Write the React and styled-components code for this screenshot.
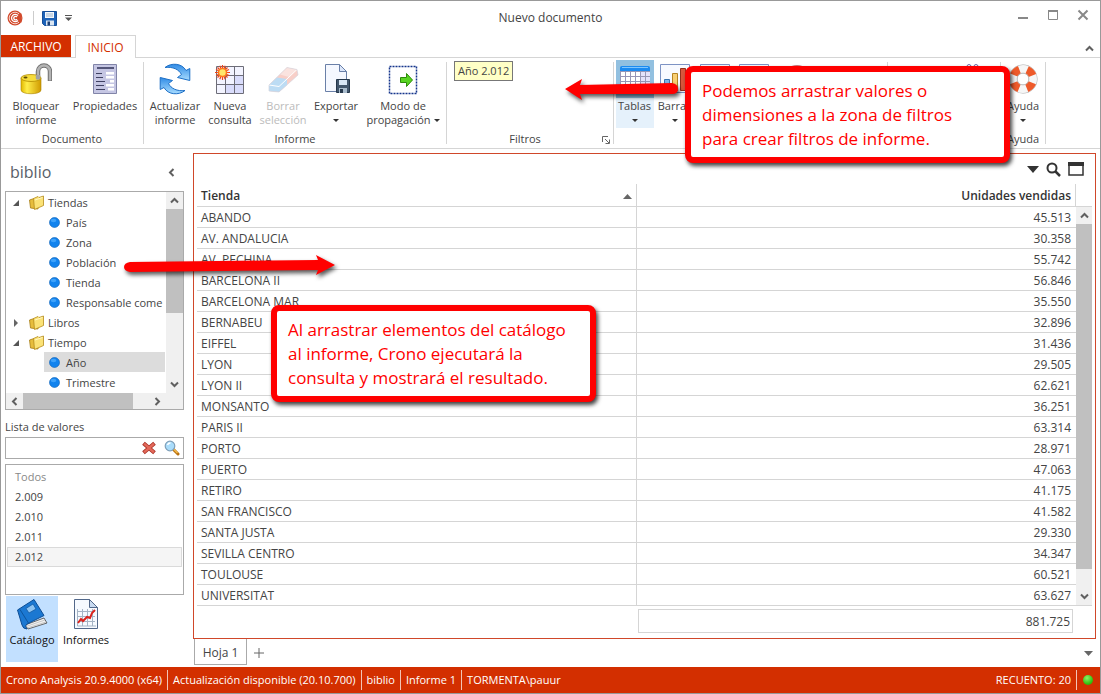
import React from "react";
import styled, { createGlobalStyle, css } from "styled-components";

const Global = createGlobalStyle`
  *, *::before, *::after { box-sizing: border-box; }
  body { margin: 0; background: #fff; }
  body, button, input, table { font-family: "Open Sans", "Noto Sans", sans-serif; font-size: 12px; line-height: 14px; color: #444; }
  button { border: 0; padding: 0; background: transparent; }
  ul { list-style: none; margin: 0; padding: 0; }
  svg { display: block; flex: none; }
`;

const accent = "#d32f00";
const line = "#d5d5d5";

const Window = styled.div`
  position: relative;
  display: flex;
  flex-direction: column;
  min-height: 100vh;
  border: 1px solid #999;
  overflow: hidden;
`;

const TitleBar = styled.header`
  display: grid;
  grid-template-columns: 1fr auto 1fr;
  align-items: center;
  height: 34px;
  padding: 0 6px;
`;
const QuickAccess = styled.div`
  display: flex;
  align-items: center;
  gap: 8px;
`;
const QuickDivider = styled.span`
  width: 1px;
  height: 14px;
  margin-left: 2px;
  background: #ccc;
`;
const Title = styled.h1`
  margin: 0;
  font-size: 12px;
  font-weight: 400;
`;
const WindowButtons = styled.div`
  display: flex;
  justify-content: flex-end;
  align-items: center;
  gap: 18px;
  padding: 0 5px 6px 0;
`;

const TabRow = styled.nav`
  display: flex;
  align-items: flex-end;
  gap: 4px;
  height: 23px;
  padding-right: 6px;
  box-shadow: inset 0 -1px ${line};
`;
const RibbonTab = styled.button`
  height: 23px;
  padding-top: 2px;
  color: ${accent};
  ${(p) =>
    p.$file
      ? css`
          width: 70px;
          height: 22px;
          align-self: flex-start;
          background: ${accent};
          color: #fff;
        `
      : css`
          width: 61px;
          background: #fff;
          border: 1px solid ${line};
          border-bottom: 0;
        `}
`;
const Collapse = styled.button`
  margin: 0 0 5px auto;
`;

const Ribbon = styled.section`
  display: flex;
  height: 91px;
  border-bottom: 1px solid ${line};
  font-size: 11px;
  button { font-size: 11px; }
`;
const Separator = styled.span`
  flex: none;
  width: 1px;
  margin: 4px 0;
  background: ${line};
`;
const Group = styled.div`
  display: flex;
  flex-direction: column;
  flex: none;
  width: ${(p) => p.$w}px;
`;
const GroupItems = styled.div`
  display: flex;
  justify-content: center;
  flex: 1;
  padding: 2px 0 4px;
`;
const GroupLabel = styled.div`
  display: flex;
  justify-content: center;
  align-items: center;
  position: relative;
  height: 14px;
  margin-bottom: 2px;
  padding-right: ${(p) => (p.$launcher ? 10 : 0)}px;
`;
const Launcher = styled.button`
  position: absolute;
  right: 3px;
  top: 4px;
`;
const Tool = styled.button`
  display: flex;
  flex-direction: column;
  align-items: center;
  flex: none;
  width: ${(p) => p.$w}px;
  padding-top: 3px;
  white-space: pre-line;
  text-align: center;
  ${(p) => p.$active && css`background: linear-gradient(#92c0e0 38px, #e5f1fb 38px);`}
  &:disabled { color: #bbb; }
  > svg { margin-bottom: 4px; }
`;
const ToolLine = styled.span`
  display: flex;
  align-items: center;
  gap: 3px;
  height: 14px;
`;
const Caret = styled.span`
  display: inline-block;
  border: 3px solid transparent;
  border-top-color: #333;
  border-bottom: 0;
  ${(p) => p.$below && css`margin-top: 6px;`}
`;
const FilterZone = styled.div`
  flex: 1;
  padding: 3px 7px;
`;
const FilterChip = styled.button`
  height: 20px;
  padding: 0 3px;
  border: 1px solid #777;
  background: #ffffc6;
`;

const Body = styled.div`
  display: flex;
  flex: 1;
`;
const Sidebar = styled.aside`
  display: flex;
  flex-direction: column;
  width: 183px;
  margin-right: 9px;
  padding-left: 4px;
`;
const SideHeader = styled.div`
  display: flex;
  align-items: center;
  justify-content: space-between;
  height: 42px;
  padding: 4px 8px 0 5px;
`;
const SideTitle = styled.h2`
  margin: 0;
  font-size: 16px;
  line-height: 24px;
  font-weight: 400;
  color: #586068;
`;
const Box = styled.div`
  border: 1px solid #aaa;
  background: #fff;
`;
const TreeGrid = styled(Box)`
  display: grid;
  grid-template-columns: 1fr 17px;
  grid-template-rows: 201px 16px;
  height: 219px;
`;
const Tree = styled.ul`
  overflow: hidden;
  white-space: nowrap;
  font-size: 11px;
`;
const Folder = styled.div`
  display: flex;
  align-items: center;
  height: 20px;
  padding: 1px 0 0 6px;
  > svg:nth-child(2) { margin: 0 4px 0 9px; }
`;
const Leaf = styled.li`
  display: flex;
  align-items: center;
  gap: 6px;
  height: 20px;
  margin: 0 1px 0 38px;
  padding: 1px 0 0 5px;
  background: ${(p) => (p.$selected ? "#dcdcdc" : "transparent")};
`;
const Track = styled.div`
  display: flex;
  flex-direction: ${(p) => (p.$across ? "row" : "column")};
  background: #f0f0f0;
`;
const TrackButton = styled.button`
  display: flex;
  align-items: center;
  justify-content: center;
  flex: none;
  width: 17px;
  height: 17px;
`;
const Thumb = styled.span`
  flex: ${(p) => p.$part} 0 0px;
  background: #c0c0c0;
`;
const Rest = styled.span`
  flex: ${(p) => p.$part} 0 0px;
`;
const Corner = styled.div`
  background: #f0f0f0;
`;
const FieldLabel = styled.label`
  margin: 10px 0 3px;
  font-size: 11px;
`;
const SearchBox = styled(Box)`
  display: flex;
  align-items: center;
  gap: 8px;
  height: 22px;
  padding-right: 3px;
  margin-bottom: 5px;
  input { flex: 1; min-width: 0; height: 18px; border: 0; outline: 0; padding: 0 4px; }
`;
const Values = styled(Box).attrs({ as: "ul" })`
  flex: none;
  min-height: 131px;
  padding: 2px 1px;
  font-size: 11px;
`;
const Value = styled.li`
  height: 20px;
  padding: 2px 7px;
  border: 1px solid ${(p) => (p.$selected ? "#dadada" : "transparent")};
  background: ${(p) => (p.$selected ? "#f5f5f5" : "transparent")};
  color: ${(p) => (p.$muted ? "#888" : "inherit")};
`;
const ViewNav = styled.nav`
  display: flex;
  gap: 2px;
  margin: 1px 0 5px 1px;
`;
const ViewButton = styled.button`
  display: flex;
  flex-direction: column;
  align-items: center;
  gap: 3px;
  width: 52px;
  height: 66px;
  padding-top: 2px;
  font-size: 11px;
  color: #111;
  background: ${(p) => (p.$active ? "#c2e0ff" : "transparent")};
`;

const Main = styled.main`
  display: flex;
  flex-direction: column;
  flex: 1;
  min-width: 0;
  padding: 4px 4px 0 0;
`;
const Report = styled.section`
  border: 1px solid #d0472a;
  padding: 0 3px 5px;
`;
const ReportTools = styled.div`
  display: flex;
  align-items: center;
  justify-content: flex-end;
  gap: 7px;
  height: 30px;
  padding-right: 8px;
`;
const TableArea = styled.div`
  display: flex;
`;
const Table = styled.table`
  flex: 1;
  width: 100%;
  table-layout: fixed;
  border-collapse: separate;
  border-spacing: 0;
  th, td { text-align: left; padding: 2px 4px 0; border-bottom: 1px solid ${line}; border-right: 1px solid ${line}; }
  th { height: 23px; color: #333; font-weight: 600; }
  td { height: 21px; }
  th:last-child, td:last-child { text-align: right; }
  td:last-child { border-right: 0; padding-right: 5px; }
`;
const SortHead = styled.div`
  display: flex;
  align-items: center;
  justify-content: space-between;
`;
const TableScroll = styled(Track)`
  flex: none;
  width: 16px;
  margin-top: 22px;
  border: 1px solid ${line};
  border-width: 1px 0;
`;
const Total = styled.div`
  margin: 3px 19px 0 calc(50% - 7px);
  height: 24px;
  padding: 5px 2px 0 0;
  border: 1px solid ${line};
  text-align: right;
`;
const Sheets = styled.div`
  display: flex;
  align-items: center;
  flex: 1;
  min-height: 28px;
  padding: 0 3px 0 1px;
`;
const Sheet = styled.button`
  align-self: flex-start;
  width: 53px;
  height: 26px;
  padding-top: 2px;
  border: 1px solid #aaa;
  border-top: 0;
`;
const AddSheet = styled.button`
  margin-left: 7px;
`;
const SheetMenu = styled.button`
  margin-left: auto;
`;

const Status = styled.footer`
  display: flex;
  align-items: center;
  height: 26px;
  padding: 0 7px 0 0;
  background: ${accent};
  color: #fff;
  font-size: 11px;
`;
const StatusItem = styled.span`
  display: flex;
  align-items: center;
  height: 20px;
  padding: 0 5px;
  white-space: nowrap;
  border-right: ${(p) => (p.$last ? 0 : 1)}px solid #f3c3b5;
  margin-left: ${(p) => (p.$push ? "auto" : 0)};
`;
const Led = styled.span`
  width: 10px;
  height: 10px;
  margin-left: 6px;
  border-radius: 50%;
  background: radial-gradient(circle at 4px 3px, #8cf06a, #35c512 60%, #1f9a08);
`;

const Callout = styled.p`
  position: absolute;
  left: ${(p) => p.$x}px;
  top: ${(p) => p.$y}px;
  width: 325px;
  margin: 0;
  padding: 7px 11px 6px;
  border: 6px solid #f00;
  border-radius: 8px;
  background: #fff;
  box-shadow: 2px 3px 4px rgba(0, 0, 0, 0.75);
  color: #f00;
  font-size: 17px;
  line-height: 24px;
  white-space: pre;
`;
const Arrow = styled.svg`
  position: absolute;
  left: ${(p) => p.$x}px;
  top: ${(p) => p.$y}px;
  filter: drop-shadow(2px 3px 2px rgba(0, 0, 0, 0.65));
`;

const Svg = ({ w = 32, h = w, children, box }) => (
  <svg width={w} height={h} viewBox={box || `0 0 ${w} ${h}`} fill="none" aria-hidden="true">{children}</svg>
);

const Logo = () => (
  <Svg w={16}>
    <circle cx="8" cy="8" r="7.500" fill="#d24a2c" />
    <circle cx="8" cy="8" r="5.800" stroke="#f6d4cb" strokeWidth="1" />
    <path d="M11 5.500A3.700 3.700 0 1 0 11 10.500M10 7A1.800 1.800 0 1 0 10 9.200" stroke="#fff" strokeWidth="1.300" />
    <path d="M12 3.500h2.500v9H12z" fill="#d24a2c" />
  </Svg>
);
const Floppy = () => (
  <Svg w={15}>
    <path d="M0.500 0.500H14.500V14.500H2.500L0.500 12.500Z" fill="#1d62b8" stroke="#174f98" />
    <path d="M3 1h9v6H3z" fill="#f4f8fc" />
    <path d="M4 3h7M4 5h7" stroke="#9db4cc" />
    <path d="M4 9.500h8V14.500H4z" fill="#dbe6f2" />
    <path d="M5.500 10.500h2.500v4h-2.500z" fill="#1b3d73" />
  </Svg>
);
const QuickCaret = () => (
  <Svg w={7} h={6}><path d="M0 .5H7" stroke="#555" /><path d="M0 2.500H7L3.500 6Z" fill="#555" /></Svg>
);
const Padlock = () => (
  <Svg>
    <defs><linearGradient id="gold"><stop stopColor="#e2b800" /><stop offset=".3" stopColor="#ffee4a" /><stop offset="1" stopColor="#d09a00" /></linearGradient></defs>
    <path d="M18 17V8.500a6 6 0 0 1 12 0V18" stroke="#6f6f6f" strokeWidth="4.500" />
    <path d="M18 17V8.500a6 6 0 0 1 12 0V17.500" stroke="#b4b4b4" strokeWidth="2.500" />
    <path d="M1 15V27c0 5 20 5 20 0V15Z" fill="url(#gold)" stroke="#a98200" strokeWidth=".6" />
    <ellipse cx="11" cy="15" rx="10" ry="3.500" fill="#f6dc3c" stroke="#b48c00" strokeWidth=".8" />
    <ellipse cx="5.500" cy="14.500" rx="2" ry="1" fill="#5c4a00" />
    <path d="M15.800 12v4c1 1 3.400 1 4.400 0v-4z" fill="#a2a2a2" />
  </Svg>
);
const Sheet1 = () => (
  <Svg>
    <path d="M4.500 1.500h23v29h-23z" fill="#c5c6e3" stroke="#8184a8" />
    <path d="M8 4h17v2H8z" fill="#54567a" />
    <path d="M7 10.500h6M7 14.500h7M7 18.500h9M7 22.500h8M7 26.500h9" stroke="#3f4162" />
    <path d="M17 9h8v2.500h-8zM17 13h8v2.500h-8zM21 17h4v2.500h-4zM17 21h8v2.500h-8zM19 25h6v2.500h-6z" fill="#fff" />
  </Svg>
);
const Refresh = () => (
  <Svg>
    <defs><linearGradient id="sky" x2="0" y2="1"><stop stopColor="#2f8be6" /><stop offset="1" stopColor="#a8dcff" /></linearGradient></defs>
    <path d="M6 4.500C12-.5 23 0 27 7.500L30.800 5.500V17.500L18.500 14.500L22.500 11.500C20 6.500 14 3.500 6 4.500Z" fill="url(#sky)" stroke="#1d6fc6" />
    <path d="M26 27.500C20 32.500 9 32 5 24.500L1.200 26.500V14.500L13.500 17.500L9.500 20.500C12 25.500 18 28.500 26 27.500Z" fill="url(#sky)" stroke="#1d6fc6" />
  </Svg>
);
const NewQuery = () => (
  <Svg>
    <path d="M2.500 3.500h27v27h-27z" fill="#f3f4ff" />
    <path d="M12 21h18v9H12zM21 12h8v18h-8z" fill="#d9dcfb" />
    <path d="M11.500 3.500v27M20.500 3.500v27M2.500 12.500h27M2.500 21.500h27M2.500 3.500h27v27h-27z" stroke="#6d6d78" />
    <path d="M8.500 2v15M1 9.500h15M3.500 4.500l10 10M13.500 4.500l-10 10M5.800 2.800l5.400 13.400M2 6.500l13 6M15 6.500l-13 6M11.200 2.800L5.800 16.200" stroke="#f0451c" strokeWidth="1.200" />
    <circle cx="8.500" cy="9.500" r="4.800" fill="#ff7a1c" /><circle cx="8.500" cy="9.500" r="3.200" fill="#ffe76a" />
  </Svg>
);
const Eraser = () => (
  <Svg>
    <path d="M2 22L20 4.500L30 6.500L31 12L12 29L2 28Z" fill="#f8cfc8" />
    <path d="M2 22L10 14.500L20 16L20 22L12 29L2 28Z" fill="#bcdcf4" />
    <path d="M13 11.500L20 4.500L30 6.500L22 14Z" fill="#fae3df" />
    <path d="M2 22L12 23.500L30 6.500" stroke="#fff" />
    <path d="M20 4.500L30 6.500L31 12L12 29L2 28V22Z" stroke="#d5d4dc" strokeWidth=".7" />
  </Svg>
);
const Export = () => (
  <Svg>
    <path d="M5.500 1.500H19.500L26.500 8.500V28.500H5.500Z" fill="#f5f8ff" stroke="#6a80a8" />
    <path d="M19.500 1.500V8.500H26.500Z" fill="#dbe6fa" stroke="#6a80a8" />
    <path d="M16.500 16.500h13v13h-13z" fill="#42566c" stroke="#26384c" />
    <path d="M19 17h8v5h-8z" fill="#d8e6f5" /><path d="M19 25h8v5h-8z" fill="#a9bccd" /><path d="M20 26h3v4h-3z" fill="#26384c" />
  </Svg>
);
const Propagate = () => (
  <Svg>
    <path d="M2.500 3.500h27v27h-27z" stroke="#15358c" strokeWidth="1.500" strokeDasharray="2 1" />
    <path d="M13.500 14.500h6v-4l6 6.500l-6 6.500v-4h-6z" fill="#58d421" stroke="#2d8a0a" />
  </Svg>
);
const Calendar = () => (
  <Svg>
    <path d="M1 8h30v21H1z" fill="#9796b5" />
    {[0, 1, 2, 3].flatMap((r) => [0, 1, 2, 3, 4, 5].map((c) => (
      <rect key={`${r}-${c}`} x={2 + c * 5} y={9 + r * 5} width="4" height="4" fill={c > 3 ? "#e3e2fa" : "#fff"} />
    )))}
    <path d="M1 8V5Q1 3 3 3H29Q31 3 31 5V8Z" fill="#1d8bf0" /><path d="M3 4.500h26" stroke="#7fc6ff" />
  </Svg>
);
const Bars = () => (
  <Svg>
    <path d="M1.500 1.500h29v28h-29z" fill="#f8faff" stroke="#7d93c4" />
    <path d="M5.500 16.500h5v11h-5z" fill="#7cb4e8" stroke="#3a72ae" /><path d="M13.500 10.500h5v17h-5z" fill="#f8cf74" stroke="#b58424" /><path d="M21.500 5.500h5v22h-5z" fill="#d9573c" stroke="#94301c" />
  </Svg>
);
const Chart = () => (
  <Svg><path d="M1.500 1.500h29v28h-29z" fill="#f8faff" stroke="#7d93c4" /><path d="M4 24l8-9 6 5 9-13" stroke="#d9573c" strokeWidth="2" /></Svg>
);
const Dial = () => (
  <Svg><circle cx="16" cy="16" r="13" fill="#f5f5f5" stroke="#c9777c" strokeWidth="2" /></Svg>
);
const Binoculars = () => (
  <Svg><circle cx="13" cy="3.500" r="2" stroke="#6b6aa8" /><circle cx="20" cy="3.500" r="2" stroke="#6b6aa8" /><path d="M11 7h11v18H11z" fill="#8483bb" /></Svg>
);
const Lifebuoy = () => (
  <Svg>
    <circle cx="16" cy="16" r="10" stroke="#aaa" strokeWidth="9" />
    <circle cx="16" cy="16" r="10" stroke="#f6f6f6" strokeWidth="8" />
    <circle cx="16" cy="16" r="10" stroke="#ee5a2a" strokeWidth="8" strokeDasharray="7.854 7.854" strokeDashoffset="-3.900" />
    <circle cx="16" cy="16" r="6" stroke="#bbb" strokeWidth=".7" />
  </Svg>
);
const FolderIcon = () => (
  <Svg w={15} h={15}>
    <path d="M.5 5L5 3.500L6 5L9 4V14L1.500 13Z" fill="#e7bd3c" stroke="#a67c14" strokeWidth=".8" />
    <path d="M4.500 3.500L9 1.500L10 2.500L14.500 1V10.500L5.500 14.500Z" fill="#fbe276" stroke="#b58b1c" strokeWidth=".8" />
    <path d="M6 5L13.500 2.500" stroke="#fff6c4" />
  </Svg>
);
const Expander = ({ open }) => (
  <Svg w={8} h={8}>{open ? <path d="M7 1V7H1Z" fill="#555" /> : <path d="M2 0V8L6 4Z" fill="#666" />}</Svg>
);
const Dot = () => (
  <Svg w={11}>
    <circle cx="5.500" cy="5.500" r="5" fill="#1283ee" stroke="#0b5fb5" strokeWidth=".6" /><ellipse cx="4.500" cy="3.500" rx="2.800" ry="1.800" fill="#3fa2fa" />
  </Svg>
);
const Chevron = ({ turn = 0 }) => (
  <Svg w={9} h={9}><path d="M1 6.500L4.500 3L8 6.500" transform={`rotate(${turn} 4.500 4.500)`} stroke="#606060" strokeWidth="2" /></Svg>
);
const RedCross = () => (
  <Svg w={14} h={14}><path d="M3 3.500L11 10.500M11 3.500L3 10.500" stroke="#a83226" strokeWidth="4" strokeLinecap="square" /><path d="M3 3.500L11 10.500M11 3.500L3 10.500" stroke="#e4695a" strokeWidth="2.400" strokeLinecap="square" /></Svg>
);
const Lens = () => (
  <Svg w={16} h={16}><path d="M9 9L14 14" stroke="#b8700e" strokeWidth="3" strokeLinecap="round" /><path d="M9.500 9L13.500 13" stroke="#f5bb4a" strokeWidth="1.500" /><circle cx="6" cy="6" r="4.800" fill="#a9dcfa" stroke="#7f9fb8" strokeWidth="1.200" /><path d="M3.500 5a3 3 0 0 1 3-2" stroke="#fff" strokeWidth="1.400" /></Svg>
);
const Book = () => (
  <Svg>
    <path d="M9 27L28 20L31 25L12 31Z" fill="#f2f2f2" stroke="#444" strokeWidth=".8" />
    <path d="M10 28.500L29 22M11 30L30 24" stroke="#aaa" strokeWidth=".6" />
    <path d="M1.500 12L18 1.500L28 17.500L11 26Q8 28 11 31Q7 31 6 27Z" fill="#1b78d2" stroke="#0d4d94" />
    <path d="M4 11.500L13 26" stroke="#0d559e" /><path d="M10 10.500L17 6L20 11L13 15Z" fill="#8cc3f2" stroke="#0d559e" strokeWidth=".7" />
  </Svg>
);
const ReportIcon = () => (
  <Svg>
    <path d="M4.500 1.500H19.500L27.500 9.500V30.500H4.500Z" fill="#f6faff" stroke="#52688a" /><path d="M19.500 1.500V9.500H27.500Z" fill="#c8daf0" stroke="#52688a" />
    <path d="M7.500 11v17H26M12.500 11v17M17.500 11v17M22.500 11v17M7 13.500h18M7 18.500h18M7 23.500h18" stroke="#a5b4c5" />
    <path d="M8 25l3-4 2 2 4-4 3 1 2-5 3-3" stroke="#dc231c" strokeWidth="2" />
  </Svg>
);

const folders = [
  { name: "Tiendas", open: true, items: ["País", "Zona", "Población", "Tienda", "Responsable come"] },
  { name: "Libros", open: false, items: [] },
  { name: "Tiempo", open: true, items: ["Año", "Trimestre"] },
];
const values = ["Todos", "2.009", "2.010", "2.011", "2.012"];
const rows = [
  ["ABANDO", "45.513"], ["AV. ANDALUCIA", "30.358"], ["AV. PECHINA", "55.742"], ["BARCELONA II", "56.846"],
  ["BARCELONA MAR", "35.550"], ["BERNABEU", "32.896"], ["EIFFEL", "31.436"], ["LYON", "29.505"], ["LYON II", "62.621"],
  ["MONSANTO", "36.251"], ["PARIS II", "63.314"], ["PORTO", "28.971"], ["PUERTO", "47.063"], ["RETIRO", "41.175"],
  ["SAN FRANCISCO", "41.582"], ["SANTA JUSTA", "29.330"], ["SEVILLA CENTRO", "34.347"], ["TOULOUSE", "60.521"], ["UNIVERSITAT", "63.627"],
];

export default function App() {
  return (
    <Window>
      <Global />
      <TitleBar>
        <QuickAccess>
          <Logo />
          <QuickDivider />
          <button aria-label="Guardar"><Floppy /></button>
          <button aria-label="Personalizar"><QuickCaret /></button>
        </QuickAccess>
        <Title>Nuevo documento</Title>
        <WindowButtons>
          <button aria-label="Minimizar"><Svg w={12}><path d="M1 9h10" stroke="#888" strokeWidth="2" /></Svg></button>
          <button aria-label="Maximizar"><Svg w={12}><path d="M1.500 2v8.500h9V2" stroke="#888" /><path d="M1 2h10" stroke="#888" strokeWidth="2" /></Svg></button>
          <button aria-label="Cerrar"><Svg w={12}><path d="M1.500 1.500l9 9M10.500 1.500l-9 9" stroke="#888" strokeWidth="2" /></Svg></button>
        </WindowButtons>
      </TitleBar>
      <TabRow>
        <RibbonTab $file>ARCHIVO</RibbonTab>
        <RibbonTab>INICIO</RibbonTab>
        <Collapse aria-label="Contraer"><Chevron /></Collapse>
      </TabRow>
      <Ribbon>
        <Group $w={142}>
          <GroupItems>
            <Tool $w={66}><Padlock />{"Bloquear\ninforme"}</Tool>
            <Tool $w={72}><Sheet1 />Propiedades</Tool>
          </GroupItems>
          <GroupLabel>Documento</GroupLabel>
        </Group>
        <Separator />
        <Group $w={302}>
          <GroupItems>
            <Tool $w={60}><Refresh />{"Actualizar\ninforme"}</Tool>
            <Tool $w={50}><NewQuery />{"Nueva\nconsulta"}</Tool>
            <Tool $w={56} disabled><Eraser />{"Borrar\nselección"}</Tool>
            <Tool $w={50}><Export />Exportar<Caret $below /></Tool>
            <Tool $w={84}><Propagate /><ToolLine>Modo de</ToolLine><ToolLine>propagación<Caret /></ToolLine></Tool>
          </GroupItems>
          <GroupLabel>Informe</GroupLabel>
        </Group>
        <Separator />
        <Group $w={166}>
          <FilterZone><FilterChip>Año 2.012</FilterChip></FilterZone>
          <GroupLabel $launcher>
            Filtros
            <Launcher aria-label="Opciones de filtros"><Svg w={8}><path d="M.5 6V.5H6M3 3l4 4M7.500 3.500v4h-4" stroke="#666" /></Svg></Launcher>
          </GroupLabel>
        </Group>
        <Separator />
        <Group $w={273}>
          <GroupItems>
            <Tool $w={38} $active><Calendar />Tablas<Caret $below /></Tool>
            <Tool $w={42}><Bars />Barras<Caret $below /></Tool>
            <Tool $w={38}><Chart /></Tool>
            <Tool $w={40}><Chart /></Tool>
            <Tool $w={46}><Dial /></Tool>
            <Tool $w={66} aria-hidden="true" />
          </GroupItems>
          <GroupLabel />
        </Group>
        <Separator />
        <Group $w={112}>
          <GroupItems>
            <Tool $w={56} aria-hidden="true" />
            <Tool $w={50}><Binoculars /></Tool>
          </GroupItems>
          <GroupLabel />
        </Group>
        <Separator />
        <Group $w={44}>
          <GroupItems><Tool $w={44}><Lifebuoy />Ayuda<Caret $below /></Tool></GroupItems>
          <GroupLabel>Ayuda</GroupLabel>
        </Group>
        <Separator />
      </Ribbon>
      <Body>
        <Sidebar>
          <SideHeader>
            <SideTitle>biblio</SideTitle>
            <button aria-label="Ocultar panel"><Chevron turn={-90} /></button>
          </SideHeader>
          <TreeGrid>
            <Tree>
              {folders.map((f) => (
                <li key={f.name}>
                  <Folder><Expander open={f.open} /><FolderIcon />{f.name}</Folder>
                  <ul>{f.items.map((n) => <Leaf key={n} $selected={n === "Año"}><Dot />{n}</Leaf>)}</ul>
                </li>
              ))}
            </Tree>
            <Track>
              <TrackButton aria-label="Subir"><Chevron /></TrackButton>
              <Thumb $part={104} /><Rest $part={63} />
              <TrackButton aria-label="Bajar"><Chevron turn={180} /></TrackButton>
            </Track>
            <Track $across>
              <TrackButton aria-label="Izquierda"><Chevron turn={-90} /></TrackButton>
              <Thumb $part={110} /><Rest $part={16} />
              <TrackButton aria-label="Derecha"><Chevron turn={90} /></TrackButton>
            </Track>
            <Corner />
          </TreeGrid>
          <FieldLabel htmlFor="valores">Lista de valores</FieldLabel>
          <SearchBox>
            <input id="valores" type="text" />
            <button aria-label="Borrar"><RedCross /></button>
            <button aria-label="Buscar"><Lens /></button>
          </SearchBox>
          <Values>
            {values.map((v) => <Value key={v} $muted={v === "Todos"} $selected={v === "2.012"}>{v}</Value>)}
          </Values>
          <ViewNav>
            <ViewButton $active><Book />Catálogo</ViewButton>
            <ViewButton><ReportIcon />Informes</ViewButton>
          </ViewNav>
        </Sidebar>
        <Main>
          <Report>
            <ReportTools>
              <button aria-label="Menú"><Svg w={12} h={7}><path d="M0 0H12L6 7Z" fill="#333" /></Svg></button>
              <button aria-label="Buscar en el informe"><Svg w={15}><circle cx="6" cy="6" r="4.500" stroke="#333" strokeWidth="2" /><path d="M9.500 9.500L14 14" stroke="#333" strokeWidth="2.500" /></Svg></button>
              <button aria-label="Maximizar informe"><Svg w={16} h={14}><path d="M1 2V13H15V2" stroke="#333" strokeWidth="1.500" /><path d="M0 2H16" stroke="#333" strokeWidth="4" /></Svg></button>
            </ReportTools>
            <TableArea>
              <Table>
                <thead>
                  <tr>
                    <th scope="col"><SortHead>Tienda<Svg w={9} h={5}><path d="M0 5H9L4.500 0Z" fill="#666" /></Svg></SortHead></th>
                    <th scope="col">Unidades vendidas</th>
                  </tr>
                </thead>
                <tbody>
                  {rows.map(([n, v]) => <tr key={n}><td>{n}</td><td>{v}</td></tr>)}
                </tbody>
              </Table>
              <TableScroll>
                <TrackButton aria-label="Subir tabla"><Chevron /></TrackButton>
                <Thumb $part={346} /><Rest $part={19} />
                <TrackButton aria-label="Bajar tabla"><Chevron turn={180} /></TrackButton>
              </TableScroll>
            </TableArea>
            <Total>881.725</Total>
          </Report>
          <Sheets>
            <Sheet>Hoja 1</Sheet>
            <AddSheet aria-label="Añadir hoja"><Svg w={10}><path d="M5 0v10M0 5h10" stroke="#666" /></Svg></AddSheet>
            <SheetMenu aria-label="Lista de hojas"><Svg w={9} h={5}><path d="M0 0H9L4.500 5Z" fill="#666" /></Svg></SheetMenu>
          </Sheets>
        </Main>
      </Body>
      <Status>
        <StatusItem>Crono Analysis 20.9.4000 (x64)</StatusItem>
        <StatusItem>Actualización disponible (20.10.700)</StatusItem>
        <StatusItem>biblio</StatusItem>
        <StatusItem>Informe 1</StatusItem>
        <StatusItem $last>TORMENTA\pauur</StatusItem>
        <StatusItem $push>RECUENTO: 20</StatusItem>
        <Led />
      </Status>
      <Arrow $x={563} $y={76} width="116" height="28" viewBox="0 0 116 28" aria-hidden="true">
        <path d="M1 12L18 2L16 8L108 6Q114 7 114 12Q114 17 108 17L16 17L18 23Z" fill="#f00" />
      </Arrow>
      <Callout $x={684} $y={65}>{"Podemos arrastrar valores o\ndimensiones a la zona de filtros\npara crear filtros de informe."}</Callout>
      <Arrow $x={121} $y={252} width="220" height="26" viewBox="0 0 220 26" aria-hidden="true">
        <path d="M213 12L194 2L196 7L8 9Q2 10 2 14Q2 18 8 19L196 17L194 22Z" fill="#f00" />
      </Arrow>
      <Callout $x={270} $y={304}>{"Al arrastrar elementos del catálogo\nal informe, Crono ejecutará la\nconsulta y mostrará el resultado."}</Callout>
    </Window>
  );
}
